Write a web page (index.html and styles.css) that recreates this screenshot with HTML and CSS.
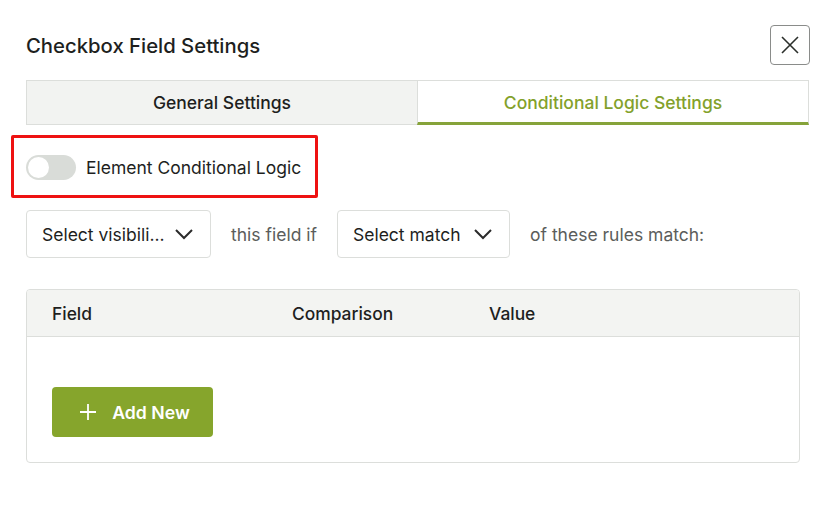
FILE: index.html
```html
<!DOCTYPE html>
<html>
<head>
<meta charset="utf-8">
<link rel="stylesheet" href="styles.css">
</head>
<body>
<div class="modal">
  <div class="header">
    <h1 class="title">Checkbox Field Settings</h1>
    <button class="close" aria-label="Close">
      <svg width="20" height="20" viewBox="0 0 20 20"><path d="M2 2 L18 18 M18 2 L2 18" stroke="#2b2f2b" stroke-width="1.6" fill="none"/></svg>
    </button>
  </div>
  <div class="tabs">
    <div class="tab">General Settings</div>
    <div class="tab active">Conditional Logic Settings</div>
  </div>
  <div class="toggle-row">
    <span class="toggle"><span class="knob"></span></span>
    <span class="toggle-label">Element Conditional Logic</span>
  </div>
  <div class="rule-row">
    <div class="select sel1">
      <span>Select visibili...</span>
      <svg width="20" height="12" viewBox="0 0 20 12"><path d="M2 2 L10 10 L18 2" stroke="#2b2b2b" stroke-width="2" fill="none"/></svg>
    </div>
    <span class="muted">this field if</span>
    <div class="select sel2">
      <span>Select match</span>
      <svg width="20" height="12" viewBox="0 0 20 12"><path d="M2 2 L10 10 L18 2" stroke="#2b2b2b" stroke-width="2" fill="none"/></svg>
    </div>
    <span class="muted">of these rules match:</span>
  </div>
  <div class="table">
    <div class="thead">
      <span class="col-field">Field</span>
      <span class="col-comp">Comparison</span>
      <span class="col-value">Value</span>
    </div>
    <div class="tbody">
      <button class="add-btn">
        <svg width="18" height="18" viewBox="0 0 18 18"><path d="M9 1 V17 M1 9 H17" stroke="#ffffff" stroke-width="1.8" fill="none"/></svg>
        <span>Add New</span>
      </button>
    </div>
  </div>
</div>
</body>
</html>
```
FILE: styles.css
```css
* { box-sizing: border-box; }
html, body { margin: 0; padding: 0; background: #ffffff; }
body { font-family: Inter, "Noto Sans", sans-serif; color: #1e1f1e; }

.modal {
  width: 783px;
  margin-left: 26px;
  padding-top: 25px;
}

.header {
  display: flex;
  align-items: center;
  justify-content: space-between;
  height: 40px;
}
.title {
  margin: 0;
  font-size: 20.3px;
  font-weight: 500;
  color: #1e1f1e;
}
.close {
  width: 40px;
  height: 40px;
  padding: 0;
  margin-right: -1px;
  border: 1px solid #8a8c8a;
  border-radius: 4px;
  background: #fff;
  display: flex;
  align-items: center;
  justify-content: center;
}

.tabs {
  margin-top: 15px;
  display: grid;
  grid-template-columns: 391px 1fr;
  height: 45px;
}
.tab {
  display: flex;
  align-items: center;
  justify-content: center;
  font-size: 17.5px;
  font-weight: 500;
  color: #1e1f1e;
  background: #f2f3f1;
  border: 1px solid #dcdedb;
  border-right: none;
}
.tab.active {
  background: #fff;
  color: #83a12b;
  border-right: 1px solid #dcdedb;
  border-bottom: 3px solid #86a33a;
  padding-top: 2px;
}

.toggle-row {
  margin-top: 10px;
  margin-left: -15px;
  width: 307px;
  height: 63px;
  border: 3px solid #ee1111;
  border-radius: 2px;
  display: flex;
  align-items: center;
  padding: 2px 0 0 12px;
  gap: 10px;
}
.toggle {
  width: 50px;
  height: 25px;
  border-radius: 13px;
  background: #d9dcd8;
  position: relative;
  flex: none;
}
.knob {
  position: absolute;
  left: 2px;
  top: 2px;
  width: 21px;
  height: 21px;
  border-radius: 50%;
  background: #fff;
}
.toggle-label {
  font-size: 17.5px;
  color: #1e1f1e;
}

.rule-row {
  margin-top: 12px;
  display: flex;
  align-items: center;
  gap: 20px;
}
.select {
  height: 48px;
  border: 1px solid #dcdedb;
  border-radius: 4px;
  display: flex;
  align-items: center;
  justify-content: space-between;
  padding: 0 16px 0 15px;
  font-size: 17.5px;
  color: #1e1f1e;
}
.sel1 { width: 185px; }
.sel2 { width: 173px; }
.muted {
  font-size: 17.5px;
  color: #5b5d5b;
}

.table {
  margin-top: 31px;
  width: 774px;
  border: 1px solid #dcdedb;
  border-radius: 4px;
  overflow: hidden;
}
.thead {
  height: 47px;
  background: #f3f4f2;
  border-bottom: 1px solid #dcdedb;
  display: flex;
  align-items: center;
  font-size: 17.4px;
  font-weight: 500;
  color: #1e1f1e;
}
.col-field { width: 265px; padding-left: 25px; }
.col-comp { width: 197px; }
.tbody {
  padding: 50px 25px 25px;
}
.add-btn {
  width: 161px;
  height: 50px;
  border: none;
  border-radius: 4px;
  background: #86a52c;
  color: #fff;
  font-family: Inter, "Noto Sans", sans-serif;
  font-size: 17.7px;
  font-weight: 600;
  display: flex;
  align-items: center;
  justify-content: center;
  gap: 15px;
  padding: 0 0 0 4px;
}
```
